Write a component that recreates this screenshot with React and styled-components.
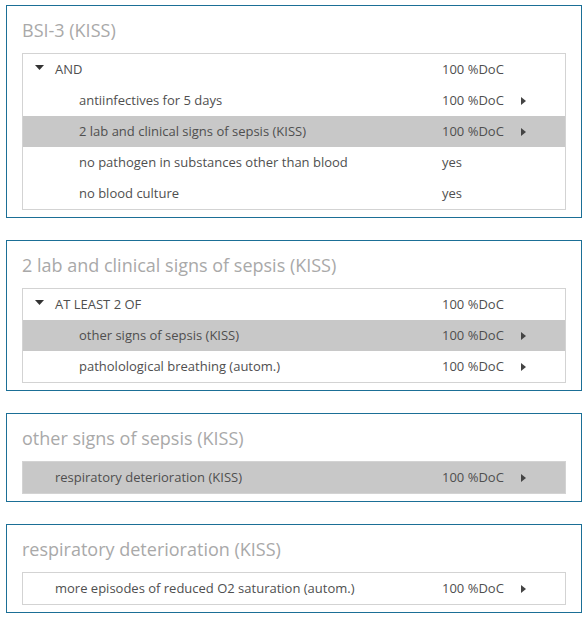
import styled, { createGlobalStyle } from "styled-components";

const GlobalStyle = createGlobalStyle`
  html, body {
    margin: 0;
    padding: 0;
    background: #ffffff;
  }
  body {
    font-family: "Open Sans", "Liberation Sans", sans-serif;
  }
`;

const panels = [
  {
    id: "bsi",
    title: "BSI-3 (KISS)",
    rows: [
      { label: "AND", value: "100 %DoC", level: 0, toggle: true },
      { label: "antiinfectives for 5 days", value: "100 %DoC", level: 1, next: true },
      { label: "2 lab and clinical signs of sepsis (KISS)", value: "100 %DoC", level: 1, next: true, active: true },
      { label: "no pathogen in substances other than blood", value: "yes", level: 1 },
      { label: "no blood culture", value: "yes", level: 1 },
    ],
  },
  {
    id: "lab",
    title: "2 lab and clinical signs of sepsis (KISS)",
    rows: [
      { label: "AT LEAST 2 OF", value: "100 %DoC", level: 0, toggle: true },
      { label: "other signs of sepsis (KISS)", value: "100 %DoC", level: 1, next: true, active: true },
      { label: "patholological breathing (autom.)", value: "100 %DoC", level: 1, next: true },
    ],
  },
  {
    id: "other",
    title: "other signs of sepsis (KISS)",
    rows: [
      { label: "respiratory deterioration (KISS)", value: "100 %DoC", level: 0, next: true, active: true },
    ],
  },
  {
    id: "resp",
    title: "respiratory deterioration (KISS)",
    rows: [
      { label: "more episodes of reduced O2 saturation (autom.)", value: "100 %DoC", level: 0, next: true },
    ],
  },
];

const StyledPage = styled.div`
  display: flex;
  flex-direction: column;
  gap: 22px;
  padding: 5px 6px;
`;

const StyledPanel = styled.section`
  display: flex;
  flex-direction: column;
  border: 1px solid #1b6f96;
  padding: 0 15px 7px;
`;

const StyledTitle = styled.h2`
  margin: 12px 0 10px;
  font-size: 18px;
  line-height: 25px;
  font-weight: 400;
  color: #a9a9a9;
`;

const StyledTable = styled.div`
  display: flex;
  flex-direction: column;
  border: 1px solid #d3d3d3;
`;

const StyledRow = styled.div`
  box-sizing: border-box;
  display: grid;
  grid-template-columns: 1fr 79px 44px;
  align-items: center;
  height: 31px;
  padding-bottom: 2px;
  font-size: 13px;
  color: #4f4f4f;
  background: ${({ $active }) => ($active ? "#c8c8c8" : "transparent")};
`;

const StyledLabel = styled.div`
  display: flex;
  align-items: center;
  padding-left: ${({ $level }) => 12 + $level * 24}px;
  white-space: nowrap;
`;

const StyledToggle = styled.span`
  display: flex;
  align-items: center;
  width: 20px;
  height: 20px;
  margin-top: -3px;
`;

const StyledValue = styled.span`
  white-space: nowrap;
`;

const StyledArrow = styled.span`
  display: flex;
  align-items: center;
  padding-top: 2px;
`;

const CaretDown = () => (
  <svg width="9" height="5" viewBox="0 0 9 5">
    <path d="M0 0 H9 L4.5 5 Z" fill="#333" />
  </svg>
);

const CaretRight = () => (
  <svg width="5" height="8" viewBox="0 0 5 8">
    <path d="M0 0 L5 4 L0 8 Z" fill="#444" />
  </svg>
);

const Panel = ({ title, rows }) => (
  <StyledPanel>
    <StyledTitle>{title}</StyledTitle>
    <StyledTable>
      {rows.map((row) => (
        <StyledRow key={row.label} $active={row.active}>
          <StyledLabel $level={row.level}>
            <StyledToggle>{row.toggle && <CaretDown />}</StyledToggle>
            {row.label}
          </StyledLabel>
          <StyledValue>{row.value}</StyledValue>
          <StyledArrow>{row.next && <CaretRight />}</StyledArrow>
        </StyledRow>
      ))}
    </StyledTable>
  </StyledPanel>
);

const App = () => (
  <>
    <GlobalStyle />
    <StyledPage>
      {panels.map((panel) => (
        <Panel key={panel.id} title={panel.title} rows={panel.rows} />
      ))}
    </StyledPage>
  </>
);

export default App;
